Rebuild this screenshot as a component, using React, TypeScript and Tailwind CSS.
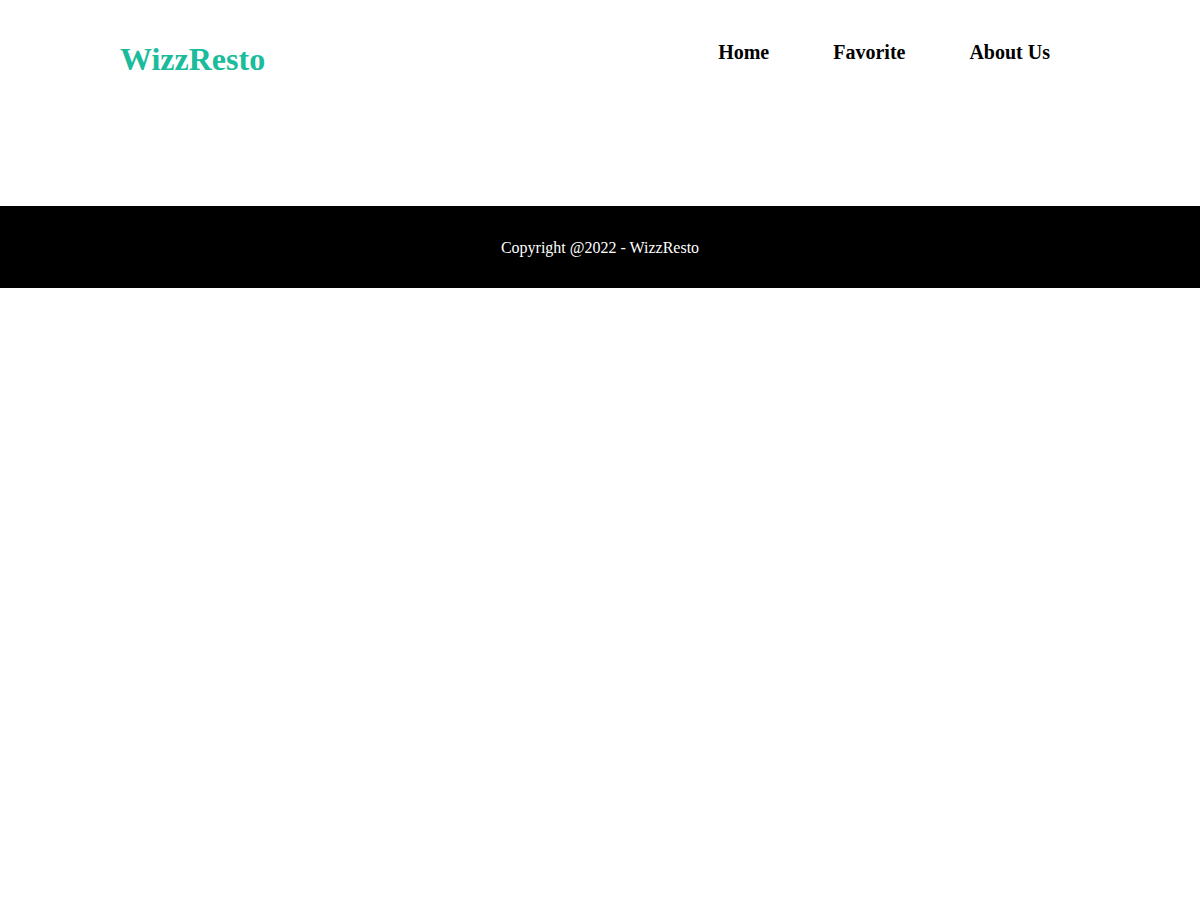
export default function App() {
  const links = ["Home", "Favorite", "About Us"];

  return (
    <div className="min-h-[900px] bg-white font-['Liberation_Serif',serif]">
      {/* Header */}
      <header className="flex items-start justify-between h-[206px] pt-[41px] pl-[120px] pr-[118px]">
        <h1 className="text-[32px] font-bold leading-[1.15] text-[#1abc9c]">WizzResto</h1>
        <nav className="flex items-start">
          {links.map((link) => (
            <a key={link} href="#" className="px-8 text-[20px] font-bold leading-[1.15] text-black">
              {link}
            </a>
          ))}
        </nav>
      </header>

      {/* Footer */}
      <footer className="flex h-[82px] items-center justify-center bg-black pt-[2px]">
        <p className="text-base leading-[1.15] text-white">Copyright @2022 - WizzResto</p>
      </footer>
    </div>
  );
}
